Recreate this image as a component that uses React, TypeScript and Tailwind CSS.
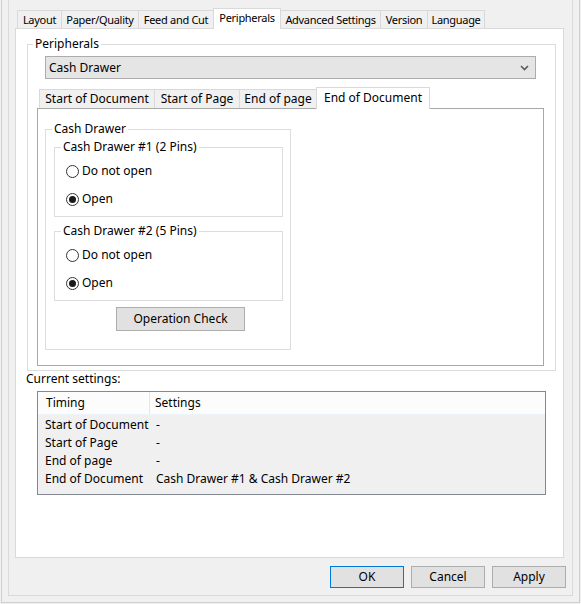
import React from 'react';

const mainTabs = [
    { label: 'Layout', w: 'w-[45px]' },
    { label: 'Paper/Quality', w: 'w-[78px]' },
    { label: 'Feed and Cut', w: 'w-[76px]' },
    { label: 'Peripherals', w: 'w-[68px]', active: true },
    { label: 'Advanced Settings', w: 'w-[101px]' },
    { label: 'Version', w: 'w-[48px]' },
    { label: 'Language', w: 'w-[58px]' },
];

const subTabs = [
    { label: 'Start of Document', w: 'w-[116px]' },
    { label: 'Start of Page', w: 'w-[86px]' },
    { label: 'End of page', w: 'w-[78px]' },
    { label: 'End of Document', w: 'w-[114px]', active: true },
];

const rows = [
    ['Start of Document', '-'],
    ['Start of Page', '-'],
    ['End of page', '-'],
    ['End of Document', 'Cash Drawer #1 & Cash Drawer #2'],
];

const Radio: React.FC<{ label: string; checked?: boolean; className?: string }> = ({ label, checked, className }) => (
    <div className={`flex items-center h-[16px] ml-[5px] ${className ?? ''}`}>
        <span className="w-[13px] h-[13px] rounded-full border border-[#333333] bg-white flex items-center justify-center">
            {checked && <span className="w-[7px] h-[7px] rounded-full bg-[#1a1a1a]" />}
        </span>
        <span className="ml-[3px]">{label}</span>
    </div>
);

const DrawerGroup: React.FC<{ title: string; className?: string }> = ({ title, className }) => (
    <fieldset className={`ml-[2px] w-[229px] h-[78px] border border-[#dcdcdc] pl-[6px] ${className ?? ''}`}>
        <legend className="px-[2px] leading-[16px]">{title}</legend>
        <Radio label="Do not open" className="mt-[8px]" />
        <Radio label="Open" checked className="mt-[12px]" />
    </fieldset>
);

export default function App() {
    return (
        <div
            className="w-[581px] h-[604px] bg-[#f0f0f0] px-px text-[12px] leading-[16px] text-black"
            style={{ fontFamily: '"Noto Sans", "Liberation Sans", sans-serif' }}
        >
            <div className="h-[603px] border-x border-b border-[#cfcfcf] px-[6px]">
                <div className="h-[596px] border-x border-b border-[#dadada] pl-[6px] flex flex-col">
                    {/* Main tabs */}
                    <div className="flex items-end h-[28px] pl-[2px]">
                        {mainTabs.map((t, i) => (
                            <div
                                key={t.label}
                                className={`${t.w} ${i > 0 ? '-ml-px' : ''} border-x border-t border-[#d9d9d9] flex items-center justify-center whitespace-nowrap text-[11px] tracking-[-0.3px] ${t.active ? 'h-[21px] -mb-px bg-white relative z-10 pb-[2px]' : 'h-[18px] bg-[#f0f0f0]'
                                    }`}
                            >
                                {t.label}
                            </div>
                        ))}
                    </div>

                    {/* Main panel */}
                    <div className="w-[549px] h-[530px] bg-white border border-[#d9d9d9] flex flex-col">
                        <fieldset className="ml-[11px] mt-[7px] w-[529px] border border-[#dcdcdc] pl-[5px] pb-[4px]">
                            <legend className="px-[2px] leading-[16px]">Peripherals</legend>
                            <div className="ml-[12px] mt-[4px] w-[491px] h-[23px] bg-[#e5e5e5] border border-[#acacac] flex items-center justify-between pl-[3px] pr-[6px]">
                                <span>Cash Drawer</span>
                                <svg width="9" height="6" viewBox="0 0 9 6">
                                    <polyline points="1,1 4.5,4.5 8,1" fill="none" stroke="#5a5a5a" strokeWidth="1.6" />
                                </svg>
                            </div>

                            {/* Sub tabs */}
                            <div className="ml-[4px] mt-[7px]">
                                <div className="flex items-end h-[22px] pl-[2px]">
                                    {subTabs.map((t, i) => (
                                        <div
                                            key={t.label}
                                            className={`${t.w} ${i > 0 ? '-ml-px' : ''} border-x border-t border-[#d9d9d9] flex items-center justify-center whitespace-nowrap ${t.active ? 'h-[22px] -mb-px bg-white relative z-10 pb-[2px]' : 'h-[19px] bg-[#f0f0f0]'
                                                }`}
                                        >
                                            {t.label}
                                        </div>
                                    ))}
                                </div>
                                <div className="w-[507px] h-[258px] border border-[#a8a8a8] bg-white pt-px">
                                    <fieldset className="ml-[7px] mt-[11px] w-[246px] border border-[#dcdcdc] pl-[6px] pb-[18px]">
                                        <legend className="px-[2px] leading-[16px]">Cash Drawer</legend>
                                        <DrawerGroup title="Cash Drawer #1 (2 Pins)" className="mt-[2px]" />
                                        <DrawerGroup title="Cash Drawer #2 (5 Pins)" className="mt-[6px]" />
                                        <button className="ml-[64px] mt-[6px] w-[129px] h-[24px] bg-[#e1e1e1] border border-[#adadad] flex items-center justify-center">
                                            Operation Check
                                        </button>
                                    </fieldset>
                                </div>
                            </div>
                        </fieldset>

                        <div className="ml-[10px]">Current settings:</div>

                        <div className="ml-[21px] mt-[4px] w-[509px] h-[104px] border border-[#828790] bg-[#f0f0f0]">
                            <div className="flex h-[23px] bg-[#fcfcfc] border-b border-[#eef3f9]">
                                <div className="w-[112px] border-r border-[#e5e5e5] pl-[8px] flex items-center">Timing</div>
                                <div className="pl-[5px] flex items-center">Settings</div>
                            </div>
                            <div className="pt-px">
                                {rows.map(([a, b]) => (
                                    <div key={a} className="flex h-[18px] items-center">
                                        <div className="w-[112px] pl-[7px] whitespace-nowrap">{a}</div>
                                        <div className="pl-[6px]">{b}</div>
                                    </div>
                                ))}
                            </div>
                        </div>
                    </div>

                    {/* Dialog buttons */}
                    <div className="flex justify-end gap-[7px] mt-[8px] w-[551px]">
                        <button className="w-[74px] h-[22px] bg-[#e1e1e1] border border-[#0078d7] flex items-center justify-center">OK</button>
                        <button className="w-[74px] h-[22px] bg-[#e1e1e1] border border-[#adadad] flex items-center justify-center">Cancel</button>
                        <button className="w-[74px] h-[22px] bg-[#e1e1e1] border border-[#adadad] flex items-center justify-center">Apply</button>
                    </div>
                </div>
            </div>
        </div>
    );
}
